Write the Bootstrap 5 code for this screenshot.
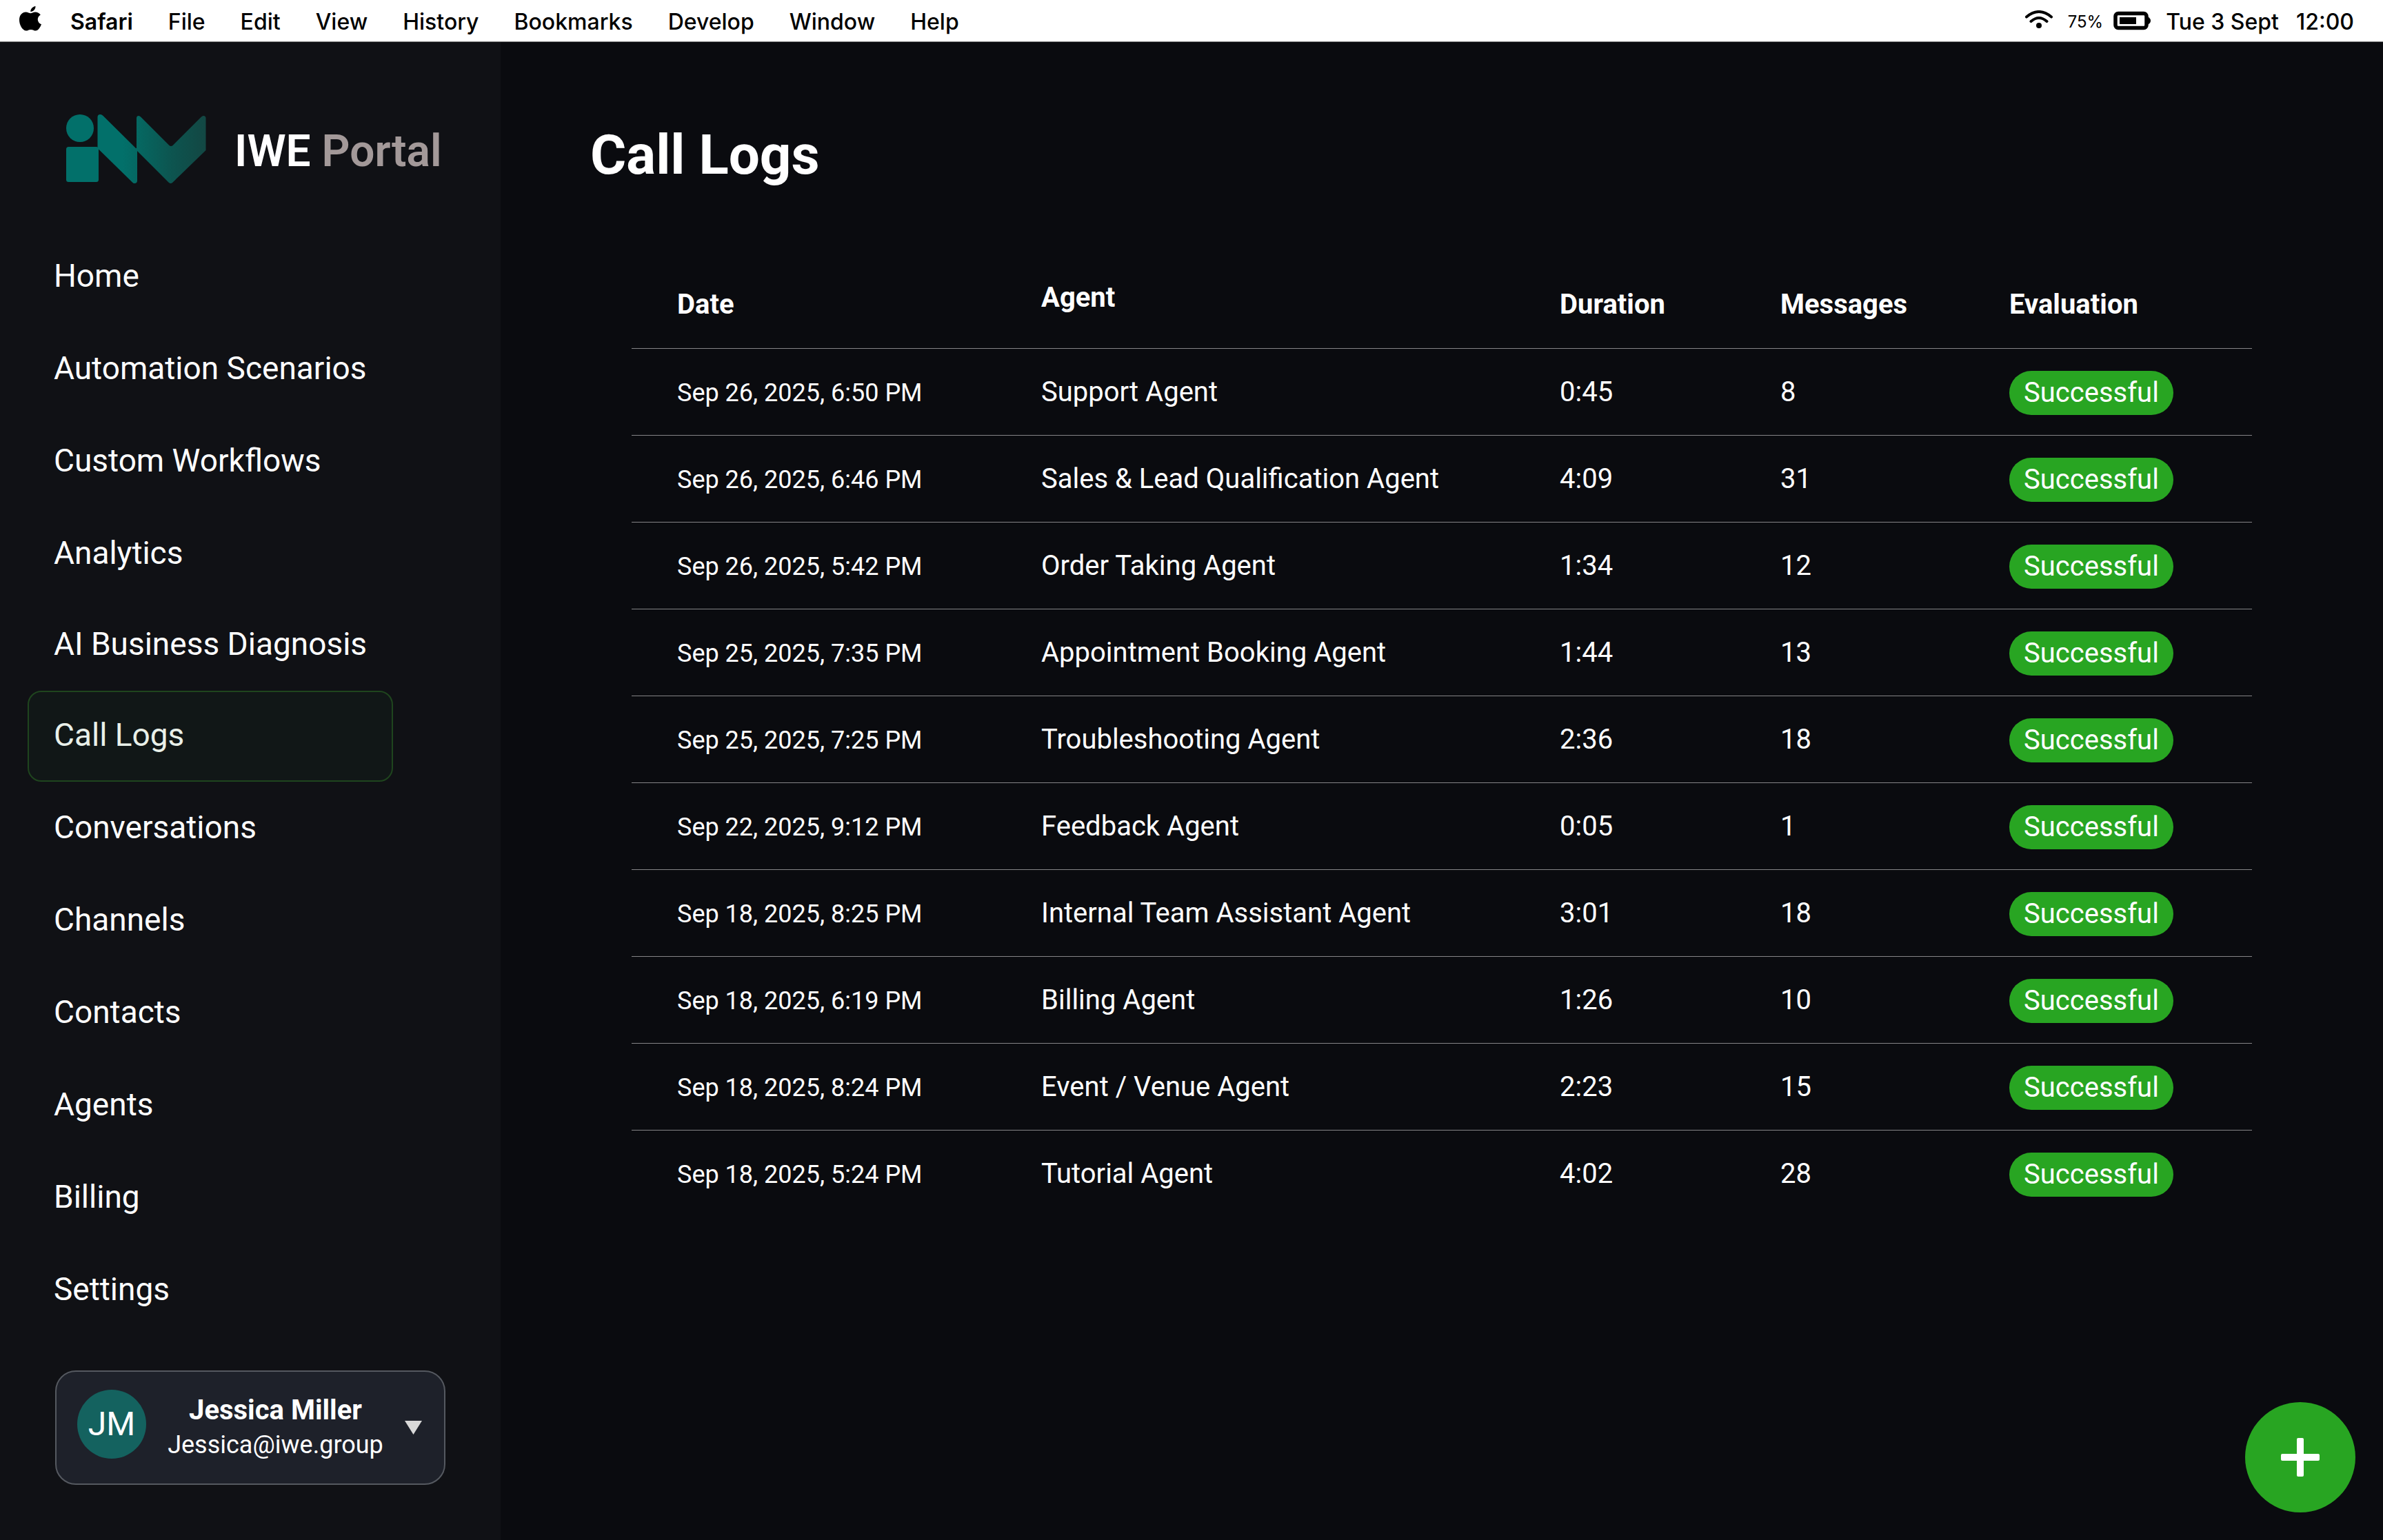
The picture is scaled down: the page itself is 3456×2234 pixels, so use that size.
<!DOCTYPE html>
<html lang="en">
<head>
<meta charset="utf-8">
<meta name="viewport" content="width=device-width, initial-scale=1">
<title>IWE Portal – Call Logs</title>
<link href="https://cdn.jsdelivr.net/npm/bootstrap@5.3.0/dist/css/bootstrap.min.css" rel="stylesheet">
<style>
  body { background: #0a0b0f; color: #fff; font-family: Roboto, "Liberation Sans", sans-serif; font-size: 40px; line-height: 48px; }
  a { color: inherit; text-decoration: none; }

  /* System menu bar */
  .menubar { background: #fff; color: #000; border-bottom: 1px solid #7f7f7f; font-family: Inter, sans-serif; font-size: 32px; line-height: 48px; padding: 0 42px 0 28px; height: 61px; }
  .menubar .apple { margin-right: 42px; margin-bottom: 6px; }
  .menu-list, .pct, .clock { padding-top: 4px; }
  .menu-list { gap: 51px; font-weight: 500; }
  .pct { font-size: 24px; margin: 0 15px 0 21px; }
  .clock { gap: 25px; margin-left: 22px; font-weight: 500; }

  /* Sidebar */
  .side-pane { background: #101115; width: 726px; padding: 105px 80px 78px 40px; }
  .brand { gap: 40px; padding-left: 56px; font-size: 64px; line-height: 76px; font-weight: 600; margin-bottom: 62px; white-space: nowrap; }
  .brand-sub { color: #a39999; }
  .side-link { display: flex; align-items: center; width: 530px; height: 132px; margin-bottom: 2px; padding: 0 0 4px 36px; border: 2px solid transparent; border-radius: 20px; font-size: 46px; }
  .side-link.snug { margin-bottom: 0; }
  .side-link.active { background: #111717; border-color: #1f451e; color: #e9f0e9; }
  .user-box { background: #1e212a; border: 2px solid #555960; border-radius: 30px; color: #fff; width: 566px; height: 166px; margin: 50px 0 0 40px; padding: 0 32px 0 30px; line-height: 50px; }
  .avatar { width: 100px; height: 100px; margin-bottom: 10px; background: #14625f; font-size: 48px; }
  .mail { font-size: 36px; }

  /* Call log */
  .content { padding: 116px 190px 80px; }
  .page-title { font-size: 80px; line-height: 96px; font-weight: 700; margin: 0 0 135px -60px; }
  .log-table { width: 100%; table-layout: fixed; }
  .log-table th { font-weight: 700; padding: 0 0 39px; vertical-align: bottom; }
  .log-table th.th-agent { padding-bottom: 49px; }
  .log-table td { height: 126px; padding: 0; vertical-align: middle; }
  .log-table tr > :first-child { padding-left: 66px; }
  .log-table thead th, .log-table tbody tr:not(:last-child) td { border-bottom: 1px solid #858587; }
  .log-table td.when { font-size: 36px; padding-top: 2px; }
  .log-table td.result { padding-top: 3px; }
  .status { background: #28a522; height: 64px; line-height: 64px; padding: 0 21px; display: block; width: fit-content; }
  .c-date { width: 594px; } .c-dur { width: 320px; } .c-msg { width: 332px; } .c-eval { width: 352px; }

  .fab { width: 160px; height: 160px; right: 40px; bottom: 40px; background: #28a522; }
</style>
<script src="https://cdn.jsdelivr.net/npm/bootstrap@5.3.0/dist/js/bootstrap.bundle.min.js"></script>
</head>
<body class="d-flex flex-column min-vh-100">

<header class="menubar d-flex align-items-center">
  <svg class="apple" width="32" height="36" viewBox="0 0 32 36" aria-hidden="true">
    <path d="M23.5 0c.3 3.800-3 8-7.200 8C15.900 4.300 19.500.4 23.500 0z"/>
    <path d="M16.300 10.300c1.600 0 3.700-1.900 7-1.900 2.600 0 5.600 1.200 7.500 4.100-6 3.600-5 11.500 1.200 13.800-1.500 4-4.700 9.300-8.200 9.300-2.700 0-3.700-1.700-7-1.700s-4.400 1.700-6.900 1.700C4.700 35.600 0 27.200 0 20.100 0 12.500 4.700 8.500 9.300 8.500c3 0 5.400 1.800 7 1.800z"/>
  </svg>
  <nav class="menu-list d-flex" aria-label="Menu bar">
    <a href="#" class="fw-semibold">Safari</a>
    <a href="#">File</a>
    <a href="#">Edit</a>
    <a href="#">View</a>
    <a href="#">History</a>
    <a href="#">Bookmarks</a>
    <a href="#">Develop</a>
    <a href="#">Window</a>
    <a href="#">Help</a>
  </nav>
  <div class="d-flex align-items-center ms-auto">
    <svg width="42" height="30" viewBox="0 0 42 30" fill="none" stroke="#000" stroke-width="4" stroke-linecap="round" aria-hidden="true">
      <path d="M3 9.500Q21-5.500 39 9.500M9.500 16Q21 6 32.500 16"/>
      <circle cx="21" cy="22" r="4" fill="#000" stroke="none"/>
    </svg>
    <span class="pct">75%</span>
    <svg width="54" height="28" viewBox="0 0 54 28" aria-hidden="true">
      <rect x="3" y="3.500" width="45" height="21" rx="4" fill="none" stroke="#000" stroke-width="5.500"/>
      <rect x="9" y="9" width="24" height="10"/>
      <path d="M50 8.500q4 2 4 5.500t-4 5.500z"/>
    </svg>
    <div class="clock d-flex"><span>Tue 3 Sept</span><span>12:00</span></div>
  </div>
</header>

<div class="d-flex flex-grow-1">
  <aside class="side-pane flex-shrink-0">
    <div class="brand d-flex align-items-center">
      <svg width="204" height="108" viewBox="96 166 204 108" aria-hidden="true">
        <defs>
          <linearGradient id="teal" gradientUnits="userSpaceOnUse" x1="178" y1="0" x2="299" y2="0">
            <stop offset="0" stop-color="#02706a"/><stop offset=".22" stop-color="#066660"/><stop offset=".6" stop-color="#0d544f"/><stop offset="1" stop-color="#134743"/>
          </linearGradient>
        </defs>
        <g fill="url(#teal)">
          <circle cx="116" cy="186" r="20"/>
          <rect x="96" y="213" width="47" height="51" rx="3.500"/>
          <path d="M141.500 170q0-4 4-4 2 0 4 2L197 215h2v47q0 4-4 4-1.500 0-3-1.500L141.500 215z"/>
          <path d="M198 171.500q0-3.500 3-3.500 1.500 0 3 1.500L245.500 211q2.500 2 5 0L292 169.500q1.500-1.500 3-1.500 3.500 0 3.500 3.500V218L250 265q-2.500 2-5 0L198 218z"/>
        </g>
      </svg>
      <div>IWE <span class="brand-sub">Portal</span></div>
    </div>
    <nav aria-label="Main">
      <a class="side-link" href="#">Home</a>
      <a class="side-link" href="#">Automation Scenarios</a>
      <a class="side-link" href="#">Custom Workflows</a>
      <a class="side-link snug" href="#">Analytics</a>
      <a class="side-link snug" href="#">AI Business Diagnosis</a>
      <a class="side-link active" href="#" aria-current="page">Call Logs</a>
      <a class="side-link" href="#">Conversations</a>
      <a class="side-link" href="#">Channels</a>
      <a class="side-link" href="#">Contacts</a>
      <a class="side-link" href="#">Agents</a>
      <a class="side-link" href="#">Billing</a>
      <a class="side-link" href="#">Settings</a>
    </nav>
    <button type="button" class="user-box d-flex align-items-center justify-content-between">
      <span class="avatar rounded-circle d-flex align-items-center justify-content-center">JM</span>
      <span class="text-center"><span class="d-block fw-bold">Jessica Miller</span><span class="mail d-block">Jessica@iwe.group</span></span>
      <svg width="25" height="20" viewBox="0 0 25 20" aria-hidden="true"><path d="M0 0h25L12.500 20z" fill="#d9d9d9"/></svg>
    </button>
  </aside>

  <main class="content flex-grow-1">
    <h1 class="page-title">Call Logs</h1>
    <table class="log-table">
      <colgroup><col class="c-date"><col><col class="c-dur"><col class="c-msg"><col class="c-eval"></colgroup>
      <thead>
        <tr><th scope="col">Date</th><th scope="col" class="th-agent">Agent</th><th scope="col">Duration</th><th scope="col">Messages</th><th scope="col">Evaluation</th></tr>
      </thead>
      <tbody>
        <tr><td class="when">Sep 26, 2025, 6:50 PM</td><td>Support Agent</td><td>0:45</td><td>8</td><td class="result"><span class="status rounded-pill">Successful</span></td></tr>
        <tr><td class="when">Sep 26, 2025, 6:46 PM</td><td>Sales &amp; Lead Qualification Agent</td><td>4:09</td><td>31</td><td class="result"><span class="status rounded-pill">Successful</span></td></tr>
        <tr><td class="when">Sep 26, 2025, 5:42 PM</td><td>Order Taking Agent</td><td>1:34</td><td>12</td><td class="result"><span class="status rounded-pill">Successful</span></td></tr>
        <tr><td class="when">Sep 25, 2025, 7:35 PM</td><td>Appointment Booking Agent</td><td>1:44</td><td>13</td><td class="result"><span class="status rounded-pill">Successful</span></td></tr>
        <tr><td class="when">Sep 25, 2025, 7:25 PM</td><td>Troubleshooting Agent</td><td>2:36</td><td>18</td><td class="result"><span class="status rounded-pill">Successful</span></td></tr>
        <tr><td class="when">Sep 22, 2025, 9:12 PM</td><td>Feedback Agent</td><td>0:05</td><td>1</td><td class="result"><span class="status rounded-pill">Successful</span></td></tr>
        <tr><td class="when">Sep 18, 2025, 8:25 PM</td><td>Internal Team Assistant Agent</td><td>3:01</td><td>18</td><td class="result"><span class="status rounded-pill">Successful</span></td></tr>
        <tr><td class="when">Sep 18, 2025, 6:19 PM</td><td>Billing Agent</td><td>1:26</td><td>10</td><td class="result"><span class="status rounded-pill">Successful</span></td></tr>
        <tr><td class="when">Sep 18, 2025, 8:24 PM</td><td>Event / Venue Agent</td><td>2:23</td><td>15</td><td class="result"><span class="status rounded-pill">Successful</span></td></tr>
        <tr><td class="when">Sep 18, 2025, 5:24 PM</td><td>Tutorial Agent</td><td>4:02</td><td>28</td><td class="result"><span class="status rounded-pill">Successful</span></td></tr>
      </tbody>
    </table>
  </main>
</div>

<button type="button" class="fab btn rounded-circle position-fixed d-flex align-items-center justify-content-center p-0 border-0" aria-label="Add">
  <svg width="56" height="56" viewBox="0 0 56 56" fill="#fff" aria-hidden="true"><rect x="23" width="10" height="56" rx="2"/><rect y="23" width="56" height="10" rx="2"/></svg>
</button>
</body>
</html>
